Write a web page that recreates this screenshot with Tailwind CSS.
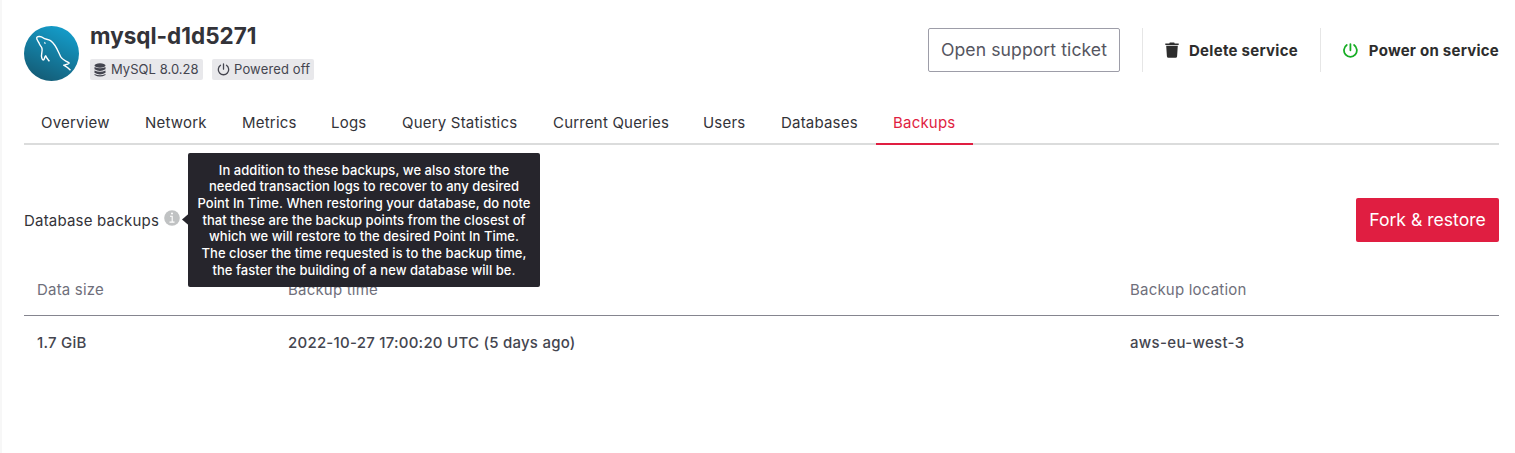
<!DOCTYPE html>
<html lang="en">
<head>
<meta charset="utf-8">
<title>mysql-d1d5271</title>
<script src="https://cdn.jsdelivr.net/npm/@tailwindcss/browser@4"></script>
</head>
<body class="h-[453px] overflow-hidden border-l-2 border-[#f7f7f7] bg-white pl-[22px] pr-4 font-['Inter',sans-serif] text-[#333339]">
<header class="flex h-[101px] items-start justify-between pt-[26px]">
  <div class="flex">
    <svg class="size-[55px]" viewBox="0 0 55 55" fill="none">
      <defs><linearGradient id="sea" x1="40" y1="3" x2="18" y2="52" gradientUnits="userSpaceOnUse"><stop stop-color="#149bc8"/><stop offset="1" stop-color="#145f7a"/></linearGradient></defs>
      <circle cx="27.500" cy="27.500" r="27.500" fill="url(#sea)"/>
      <path d="M46.500 44.300C44.300 42 41.800 40.300 39.700 39.200C42 38.600 44 38.400 45.200 37C42.500 34.800 38.500 34.300 36.800 31C34 25.500 32 18.500 26.500 14.700C23.500 12.700 21.500 13.700 19 11.700C17.500 10.500 13.200 9.700 12.700 11.700C12.200 13.700 14.800 15.700 15.500 18C16.200 20 17.500 20.500 18 22.500C18.700 25.500 16.800 28.500 17.700 31.500C18 33.500 19 34.300 19.800 33.700C20.800 32.500 20.600 30.500 21.700 29.800C22.300 32 24 33.500 25.500 35.300" stroke="#fff" stroke-width="1.400" stroke-linejoin="round"/>
      <path d="M20.400 16.300c.5.300.7.900.8 1.600" stroke="#fff" stroke-width="1.100"/>
    </svg>
    <div class="ml-[11px]">
      <h1 class="-mt-[4px] h-[28px] text-[22.500px] leading-[27px] font-bold">mysql-d1d5271</h1>
      <div class="mt-[9px] flex gap-[9px] text-[13px] leading-[21px] text-[#44454f]">
        <span class="flex w-[113px] items-center rounded-[2px] bg-[#e8e8eb] pl-[4px]">
          <svg class="mr-[5px] h-[14px] w-[12px]" viewBox="0 0 12 14" fill="currentColor"><ellipse cx="6" cy="2.500" rx="5.500" ry="2.200"/><path d="M.5 4q5.500 2.700 11 0v2.200q-5.500 3.500-11 0zM.5 7.500q5.500 2.700 11 0v2.200q-5.500 3.500-11 0zM.5 10.900q5.500 2.700 11 0v1q-5.500 3.300-11 0z"/></svg>
          <span class="tracking-[0.04px] whitespace-nowrap">MySQL 8.0.28</span>
        </span>
        <span class="flex w-[102px] items-center rounded-[2px] bg-[#e8e8eb] pl-[5px]">
          <svg class="mr-[4px] size-[13px]" viewBox="0 0 13 13" fill="none" stroke="currentColor" stroke-width="1.300" stroke-linecap="round"><path d="M6.500 1v5.200M3.500 2.300a5.200 5.200 0 1 0 6 0"/></svg>
          <span class="tracking-[0.15px] whitespace-nowrap">Powered off</span>
        </span>
      </div>
    </div>
  </div>
  <div class="mt-[2px] flex h-[44px] items-center">
    <button class="h-[44px] w-[192px] rounded-[2px] border border-[#9d9da8] text-[17.600px] tracking-[0.08px] text-[#55555f]">Open support ticket</button>
    <button class="ml-[22px] flex h-[44px] w-[178px] items-center border-l border-[#e6e6e6] pl-[22px] text-[15px] font-bold tracking-[0.28px] text-[#2d2d2d]">
      <svg class="mr-[10px] h-[16px] w-[14px]" viewBox="0 0 14 16" fill="currentColor"><path d="M4.800.4h4.400l.5 1h4v1.500H.3V1.400h4zM1.200 3.700h11.600l-.7 10.500q-.1 1.500-1.600 1.500h-7q-1.500 0-1.600-1.500z"/></svg>
      <span class="pt-[2px] whitespace-nowrap">Delete service</span>
    </button>
    <button class="flex h-[44px] w-[179px] items-center border-l border-[#e6e6e6] pl-[22px] text-[15px] font-bold tracking-[0.24px] text-[#2d2d2d]">
      <svg class="mr-[11px] size-[15px]" viewBox="0 0 15 15" fill="none" stroke="#16ad24" stroke-width="1.800" stroke-linecap="round"><path d="M7.500 1v6.300M3.800 2a6.500 6.500 0 1 0 7.400 0"/></svg>
      <span class="pt-[2px] whitespace-nowrap">Power on service</span>
    </button>
  </div>
</header>
<nav class="flex h-[44px] border-b-2 border-[#dbdcdc] text-[15px] leading-[43px] tracking-[0.2px] whitespace-nowrap">
  <a class="w-[104px] pl-[17px]">Overview</a>
  <a class="w-[97px] pl-[17px]">Network</a>
  <a class="w-[89px] pl-[17px]">Metrics</a>
  <a class="w-[71px] pl-[17px]">Logs</a>
  <a class="w-[151px] pl-[17px]">Query Statistics</a>
  <a class="w-[150px] pl-[17px]">Current Queries</a>
  <a class="w-[78px] pl-[17px]">Users</a>
  <a class="w-[112px] pl-[17px]">Databases</a>
  <a class="h-[44px] w-[97px] border-b-2 border-[#e01e41] pl-[17px] text-[#e01e41]">Backups</a>
</nav>
<main>
  <section class="mt-[53px] flex h-[44px] items-center justify-between">
    <div class="flex items-center text-[15px] tracking-[0.2px]">
      <span class="w-[140px] pt-[2px] whitespace-nowrap">Database backups</span>
      <div class="relative -mt-[5px]">
        <svg class="size-4" viewBox="0 0 16 16"><circle cx="8" cy="8" r="7.800" fill="#c0c2c3"/><path d="M6 6.300h2.200v5.500M5.500 12.100h5" fill="none" stroke="#fff" stroke-width="1.100"/><circle cx="8" cy="3.600" r="1" fill="#fff"/></svg>
        <div class="absolute -top-[57px] left-[24px] z-10 h-[134px] w-[352px] rounded-[2px] bg-[#26252c] pt-[9px] text-center text-[13px] leading-[16.700px] font-medium tracking-[0.05px] whitespace-nowrap text-white">
          <span class="absolute top-[61px] -left-[6px] h-3 w-[7px] bg-[#26252c] [clip-path:polygon(100%_0,100%_100%,0_50%)]"></span>
          In addition to these backups, we also store the<br>needed transaction logs to recover to any desired<br>Point In Time. When restoring your database, do note<br>that these are the backup points from the closest of<br>which we will restore to the desired Point In Time.<br>The closer the time requested is to the backup time,<br>the faster the building of a new database will be.
        </div>
      </div>
    </div>
    <button class="h-[44px] w-[143px] rounded-[2px] bg-[#e01e41] text-[17.600px] text-white">Fork &amp; restore</button>
  </section>
  <table class="mt-[22px] w-full table-fixed border-collapse text-left text-[15px] tracking-[0.2px]">
    <colgroup><col class="w-[251px]"><col class="w-[842px]"><col></colgroup>
    <thead><tr class="h-[51px] border-b border-[#85858f] text-[#6f6f7b]"><th class="pt-[1px] pl-[13px] font-normal">Data size</th><th class="pt-[1px] pl-[13px] font-normal">Backup time</th><th class="pt-[1px] pl-[13px] font-normal">Backup location</th></tr></thead>
    <tbody><tr class="h-[56px] font-medium tracking-[0.24px] text-[#44454f]"><td class="pl-[13px]">1.7 GiB</td><td class="pl-[13px]">2022-10-27 17:00:20 UTC (5 days ago)</td><td class="pl-[13px] tracking-[0.32px]">aws-eu-west-3</td></tr></tbody>
  </table>
</main>
</body>
</html>
